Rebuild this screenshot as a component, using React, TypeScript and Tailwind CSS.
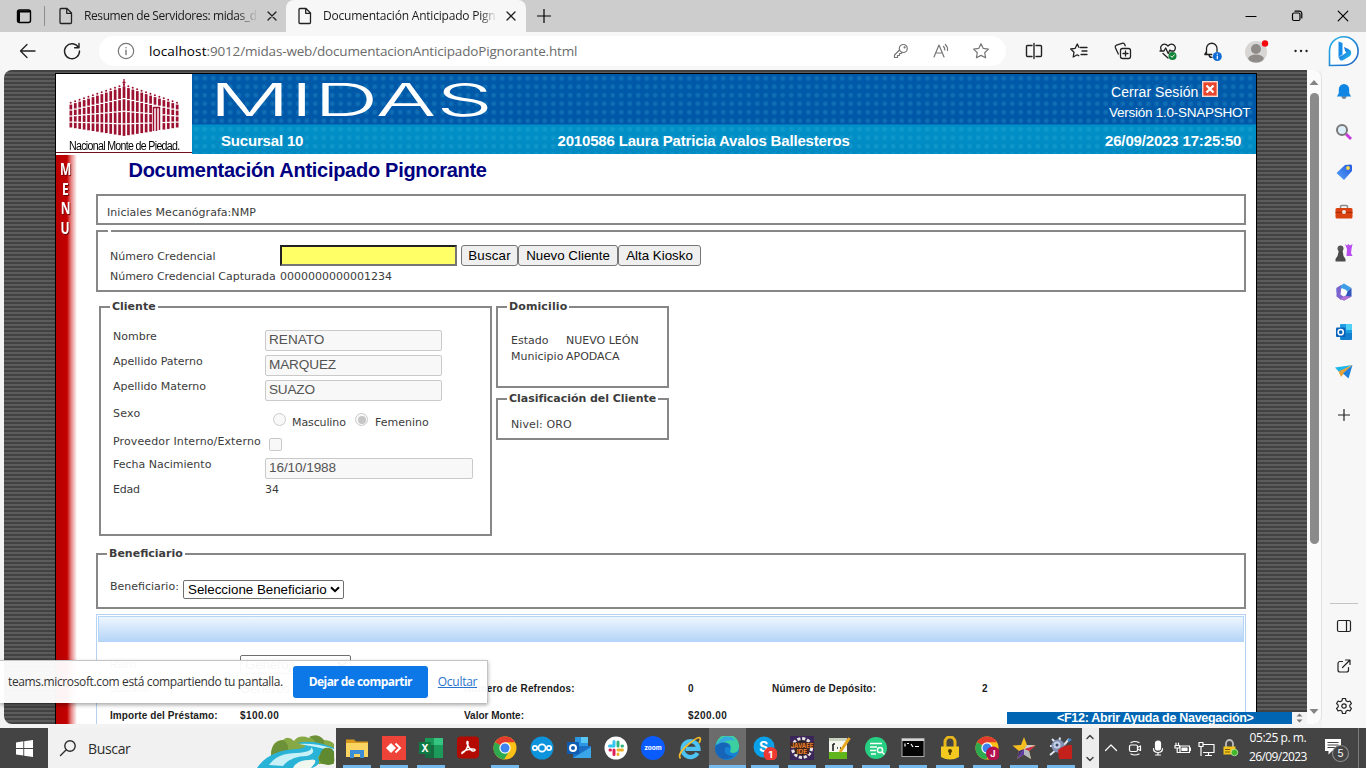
import React, { useLayoutEffect, useRef } from "react";

const VERD = "font-['DejaVu_Sans',sans-serif] text-[11px] leading-[13px] text-[#3c3c3c]";
const ARIAL = "font-['Liberation_Sans',sans-serif]";
const SEGOE = "font-['Open_Sans','Noto_Sans',sans-serif]";

/* Single line of text whose letter spacing is tuned to fill a given width. */
function T({ w, c = "", children }: { w: number; c?: string; children: string }) {
  const ref = useRef<HTMLSpanElement>(null);
  useLayoutEffect(() => {
    const el = ref.current;
    if (!el) return;
    el.style.letterSpacing = "0px";
    const natural = el.offsetWidth;
    el.style.letterSpacing = `${(w - natural) / children.length}px`;
  }, [w, children]);
  return (
    <span ref={ref} className={`inline-block shrink-0 whitespace-pre ${c}`}>
      {children}
    </span>
  );
}

function Ic({ s = 20, vb = 20, c = "", children }: { s?: number; vb?: number; c?: string; children: React.ReactNode }) {
  return (
    <svg width={s} height={s} viewBox={`0 0 ${vb} ${vb}`} className={`shrink-0 ${c}`} fill="none" stroke="currentColor" strokeWidth="1.2" strokeLinecap="round" strokeLinejoin="round">
      {children}
    </svg>
  );
}

const PageIcon = () => (
  <Ic s={18} vb={18} c="text-[#222]">
    <path d="M4 1.5h6l4.5 4.5v9.5a1 1 0 0 1-1 1H4a1 1 0 0 1-1-1v-13a1 1 0 0 1 1-1zM9.700 1.700V6.300h4.600" strokeWidth="1.300" />
  </Ic>
);
const Cross = () => (
  <Ic s={10} vb={10} c="text-[#222]"><path d="M1 1l8 8M9 1l-8 8" strokeWidth="1.300" /></Ic>
);

function TabBar() {
  return (
    <div className={`flex h-8 shrink-0 items-stretch bg-[#cdcdcd] text-[12px] text-[#1b1b1b] ${SEGOE}`}>
      <div className="flex w-[44px] items-center pl-[15px]">
        <Ic s={18} vb={18} c="text-black">
          <rect x="2.500" y="3" width="13" height="12.500" rx="2" strokeWidth="1.400" />
          <path d="M3.500 4.500h11M4 5v9" strokeWidth="2" />
        </Ic>
      </div>
      <div className="flex w-[242px] items-center">
        <div className="h-5 w-px bg-[#8c8c8c]" />
        <div className="ml-3"><PageIcon /></div>
        <div className="ml-[9px] w-[174px] overflow-hidden [mask-image:linear-gradient(90deg,#000_88%,transparent)]">
          <T w={173}>Resumen de Servidores: midas_d</T>
        </div>
        <div className="ml-[9px]"><Cross /></div>
      </div>
      <div className="flex w-[240px] items-center rounded-t-lg bg-[#f7f7f7]">
        <div className="ml-[10px]"><PageIcon /></div>
        <div className="ml-[9px] w-[174px] overflow-hidden [mask-image:linear-gradient(90deg,#000_90%,transparent)]">
          <T w={173}>Documentación Anticipado Pign</T>
        </div>
        <div className="ml-[9px]"><Cross /></div>
      </div>
      <div className="flex w-[36px] items-center justify-center">
        <Ic s={14} vb={14} c="text-black"><path d="M7 .5v13M.5 7h13" strokeWidth="1.200" /></Ic>
      </div>
      <div className="grow" />
      <div className="flex w-[138px] items-center text-black">
        <div className="flex w-[46px] justify-center"><Ic s={12} vb={12}><path d="M1 6.500h10" /></Ic></div>
        <div className="flex w-[46px] justify-center">
          <Ic s={12} vb={12}><rect x="1.500" y="3" width="7.500" height="7.500" rx="1.500" /><path d="M4 1.200h4.500a2.300 2.300 0 0 1 2.300 2.300V8" /></Ic>
        </div>
        <div className="flex w-[46px] justify-center"><Ic s={12} vb={12}><path d="M1.200 1.200l9.600 9.600M10.800 1.200l-9.600 9.600" /></Ic></div>
      </div>
    </div>
  );
}

function Toolbar() {
  return (
    <div className={`flex h-[38px] shrink-0 items-center bg-[#f7f7f7] text-[#222] ${SEGOE}`}>
      <div className="w-[18px]" />
      <Ic><path d="M17 10H2.500M9 3.500L2.500 10L9 16.500" strokeWidth="1.300" /></Ic>
      <div className="w-[24px]" />
      <Ic><path d="M16.500 6.500A7.500 7.500 0 1 0 17.500 10M17 2.500v4.300h-4.300" strokeWidth="1.400" /></Ic>
      <div className="ml-[17px] flex h-[30px] w-[907px] items-center rounded-full bg-white">
        <Ic s={18} vb={18} c="ml-[18px] text-[#777]"><circle cx="9" cy="9" r="7.700" /><path d="M9 8.200v4.300M9 5.600v.2" strokeWidth="1.400" /></Ic>
        <div className="ml-[14px] flex grow text-[13.5px]">
          <T w={58} c="text-black">localhost</T>
          <T w={371} c="text-[#6b6b6b]">:9012/midas-web/documentacionAnticipadoPignorante.html</T>
        </div>
        <div className="flex items-center text-[#777]">
          <div className="flex w-[40px] justify-center">
            <Ic s={16} vb={16}><circle cx="10.300" cy="5.500" r="4" /><circle cx="11.600" cy="4.400" r=".5" /><path d="M6.500 7L1.500 12v2.500h3v-2h2v-2h2l.700-1.300" /></Ic>
          </div>
          <div className="flex w-[40px] justify-center">
            <Ic s={18} vb={18}><path d="M2 15L7 3l5 12M3.800 11h6.400M11.500 4.500q1.500 1.500 1.300 3.500M13.300 2.500q2.700 2.500 2.200 6" /></Ic>
          </div>
          <div className="flex w-[40px] justify-center">
            <Ic s={18} vb={18}><path d="M9 1.700l2.300 4.700 5.100.7-3.700 3.600.9 5.100L9 13.400l-4.600 2.400.9-5.100L1.600 7.100l5.100-.7z" /></Ic>
          </div>
        </div>
        <div className="w-[5px]" />
      </div>
      <div className="ml-[6px] flex items-center">
        <div className="flex w-[44.5px] justify-center"><Ic s={18} vb={18}><path d="M7 3.500H2.500a1 1 0 0 0-1 1v9a1 1 0 0 0 1 1H7M11 3.500h4.500a1 1 0 0 1 1 1v9a1 1 0 0 1-1 1H11M9 1.500v15" strokeWidth="1.400" /></Ic></div>
        <div className="flex w-[44.5px] justify-center"><Ic s={18} vb={18}><path d="M10.500 5.500H17M12 9h5M11 12.500h6M9 5.500L7.300 2 5.200 6.300l-4.500.7L4 10.300l-.8 4.700 4.100-2.200 1.500.9" strokeWidth="1.300" /></Ic></div>
        <div className="flex w-[44.5px] justify-center"><Ic s={18} vb={18}><rect x="6.500" y="6.500" width="10" height="10" rx="2" strokeWidth="1.300" /><path d="M11.500 9v5M9 11.500h5M4.300 12L1.300 5.500a2 2 0 0 1 1.200-2.400L8 1.300q1.800-.5 2.600 1l.6 1.500" strokeWidth="1.300" /></Ic></div>
        <div className="flex w-[44.5px] justify-center"><Ic s={18} vb={18}><path d="M2.500 8.500Q.5 5 3.200 2.900 6.300 1 9 4q2.700-3 5.800-1.100Q17.500 5 15.500 8.500M1 9h4l1.700-3 2.500 5.500 1.700-3.500 1 1h3M4 11.500l5 4.500" strokeWidth="1.300" /><circle cx="13.500" cy="14" r="4" fill="#12843a" stroke="none" /><path d="M11.700 14l1.300 1.300 2.300-2.500" stroke="#fff" strokeWidth="1" /></Ic></div>
        <div className="flex w-[44.5px] justify-center"><Ic s={20} vb={20}><path d="M4.500 13.500V7.500a5 5 0 0 1 10.500 0v3M2.800 13.500h7M2.800 13.300L4.500 10.500M7 14q.5 2.500 3 2.300" strokeWidth="1.300" /><circle cx="15.300" cy="15.500" r="4.500" fill="#0f6cd6" stroke="none" /><path d="M15.300 15v2.700M15.300 13v.2" stroke="#fff" /></Ic></div>
        <div className="flex w-[44.5px] justify-center">
          <svg width="26" height="28" viewBox="0 0 26 28" className="-mt-[2px]"><circle cx="12" cy="16" r="11" fill="#d8d6d4" /><circle cx="12" cy="13" r="5" fill="#8e8b89" /><ellipse cx="12" cy="22.500" rx="7.700" ry="4" fill="#8e8b89" /><circle cx="21" cy="7.500" r="3.200" fill="#f50a12" /></svg>
        </div>
        <div className="flex w-[44.5px] justify-center"><Ic s={18} vb={18}><path d="M3.500 9h.1M9 9h.1M14.500 9h.1" strokeWidth="2.300" /></Ic></div>
      </div>
      <div className="ml-[4px] h-[32px] w-[32px]">
        <svg width="32" height="32" viewBox="0 0 32 32">
          <defs>
            <linearGradient id="bg1" x1="0" y1="0" x2="1" y2="1"><stop offset="0" stopColor="#2bb5e8" /><stop offset="1" stopColor="#1a5fc4" /></linearGradient>
            <linearGradient id="bg2" x1="0" y1="0" x2="1" y2="1"><stop offset="0" stopColor="#1659d6" /><stop offset="1" stopColor="#27c5ef" /></linearGradient>
          </defs>
          <path d="M1.500 30.500V16A14.300 14.300 0 1 1 16 30.300z" fill="#fff" stroke="url(#bg1)" strokeWidth="1.600" />
          <path d="M10.500 6.500l4 1.500v11.500l-4 2.500z" fill="#178be8" />
          <path d="M16 12l4.500 2q3 1.500 2.800 4 0 2-2 3.500l-6.300 3.700q-1.500.8-3-.3L10.500 22l3.500-1.500 4.500-3-1.300-1.300z" fill="url(#bg2)" />
        </svg>
      </div>
    </div>
  );
}

function Building() {
  const cols = Array.from({ length: 25 }, (_, i) => i);
  return (
    <svg width="112" height="59" viewBox="0 0 112 59" className="shrink-0">
      {cols.map((i) => {
        const d = Math.abs(i - 12);
        const x = 1.5 + i * 4.43;
        const top = 7 + d * 1.5;
        const bot = 57.5 - d * 0.7;
        const h = (bot - top) / 4;
        return (
          <g key={i} fill="#9c1030">
            {[0, 1, 2, 3].map((r) => (
              <rect key={r} x={x} y={top + r * h + 0.6} width="2.7" height={h - 1.200} />
            ))}
            <circle cx={x + 1.2} cy={top - 1.300} r="1" />
          </g>
        );
      })}
      <path d="M56 0v8M54.500 3.500h3" stroke="#9c1030" strokeWidth="1.300" />
      <path d="M84.500 27h9v26h-9z" fill="#fff" />
      <path d="M85.500 28v24M88.500 28v24M91.500 28v23M85 28.500h7" stroke="#9c1030" strokeWidth="1.500" fill="none" />
    </svg>
  );
}

function Header() {
  return (
    <div className={`flex h-[80px] shrink-0 ${ARIAL}`}>
      <div className="flex w-[136px] flex-col items-center bg-white pt-[5px]">
        <Building />
        <div className="mt-[1px] h-[13px] w-[110px]">
          <div className="w-[130px] origin-left scale-x-[0.85] text-[12.5px] leading-[14px] text-black"><T w={130}>Nacional Monte de Piedad.</T></div>
        </div>
        <div className="h-px w-full bg-[#6e0f1e]" />
      </div>
      <div className="flex grow flex-col bg-[radial-gradient(circle_at_center,rgba(70,190,225,0.26)_0,rgba(70,190,225,0.18)_2px,transparent_3px),linear-gradient(180deg,#0059a9_0,#0057a8_50px,#0090c8_51px,#0089c2_100%)] bg-[length:8.5px_8.5px,100%_100%] text-white">
        <div className="flex h-[50px]">
          <div className="ml-[17px] w-[286px]">
            <div className="h-[50px] w-[143px] origin-left scale-x-[2] font-['Inter',sans-serif] text-[45px] leading-[51px] font-light"><T w={142}>MIDAS</T></div>
          </div>
          <div className="grow" />
          <div className="flex w-[147px] flex-col text-[14px]">
            <div className="flex h-[29px] items-center pt-[6px] pl-[2px] leading-[16px]">
              <T w={87}>Cerrar Sesión</T>
              <svg width="16" height="16" viewBox="0 0 16 16" className="-mt-[6px] ml-1"><rect x=".7" y=".7" width="14.600" height="14.600" fill="#e8452c" stroke="#fbd9cf" strokeWidth="1.400" /><path d="M4.500 4.500l7 7M11.500 4.500l-7 7" stroke="#fff" strokeWidth="2.300" /></svg>
            </div>
            <div className="text-[13.5px] leading-[20px]"><T w={141}>Versión 1.0-SNAPSHOT</T></div>
          </div>
        </div>
        <div className="flex h-[30px] items-center pt-[4px] text-[15px] leading-[18px] font-bold">
          <div className="ml-[29px] w-[336.5px]"><T w={82}>Sucursal 10</T></div>
          <T w={292}>2010586 Laura Patricia Avalos Ballesteros</T>
          <div className="grow" />
          <div className="w-[151px]"><T w={136}>26/09/2023 17:25:50</T></div>
        </div>
      </div>
    </div>
  );
}

function Box({ legend, lw = 0, c, children }: { legend?: string; lw?: number; c: string; children: React.ReactNode }) {
  return (
    <section className={`relative shrink-0 border-2 border-[#878787] bg-white ${c}`}>
      {legend && (
        <div className={`absolute -top-[8px] left-[9px] bg-white px-[2px] font-bold ${VERD}`}><T w={lw}>{legend}</T></div>
      )}
      {children}
    </section>
  );
}

const Input = ({ w, text, tw }: { w: string; text: string; tw: number }) => (
  <div className={`flex h-[21px] items-center rounded-[2px] border border-[#cacaca] bg-[#f8f8f8] pb-px pl-[3px] text-[13.6px] leading-[16px] text-[#545454] ${w} ${ARIAL}`}>
    <T w={tw}>{text}</T>
  </div>
);
const Btn = ({ w, tw, text }: { w: string; tw: number; text: string }) => (
  <button className={`flex h-[21px] items-center justify-center rounded-[3px] border border-[#767676] bg-[#efefef] text-[13.33px] leading-none text-black ${w} ${ARIAL}`}>
    <T w={tw}>{text}</T>
  </button>
);
const Select = ({ w, tw, text }: { w: string; tw: number; text: string }) => (
  <div className={`flex h-[19px] items-center justify-between rounded-[2px] border border-[#6f6f6f] bg-white pr-[3px] pl-[4px] text-[13.33px] leading-none text-black ${w} ${ARIAL}`}>
    <T w={tw}>{text}</T>
    <svg width="10" height="7" viewBox="0 0 10 7"><path d="M1 1.200l4 4 4-4" fill="none" stroke="#000" strokeWidth="2" /></svg>
  </div>
);

function Cliente() {
  return (
    <Box legend="Cliente" lw={44} c={`ml-[3px] h-[230px] w-[393px] pt-[22px] pl-[12px] ${VERD}`}>
      <div className="flex h-[25px]"><div className="w-[152px]"><T w={44}>Nombre</T></div><Input w="w-[177px]" text="RENATO" tw={55} /></div>
      <div className="flex h-[25px]"><div className="w-[152px]"><T w={90}>Apellido Paterno</T></div><Input w="w-[177px]" text="MARQUEZ" tw={67} /></div>
      <div className="flex h-[25px]"><div className="w-[152px]"><T w={93}>Apellido Materno</T></div><Input w="w-[177px]" text="SUAZO" tw={46} /></div>
      <div className="flex h-[29px]">
        <div className="w-[160px] pt-[2px]"><T w={27}>Sexo</T></div>
        <div className="mt-[8px] size-[13px] rounded-full border border-[#cacaca] bg-[#f8f8f8]" />
        <div className="ml-[6px] w-[63px] pt-[11px]"><T w={54}>Masculino</T></div>
        <div className="mt-[8px] flex size-[13px] items-center justify-center rounded-full border border-[#cacaca] bg-[#f8f8f8]"><div className="size-[8px] rounded-full bg-[#c6c6c6]" /></div>
        <div className="ml-[7px] pt-[11px]"><T w={54}>Femenino</T></div>
      </div>
      <div className="flex h-[24px]">
        <div className="w-[156px] pt-[1px]"><T w={148}>Proveedor Interno/Externo</T></div>
        <div className="mt-[4px] size-[13px] rounded-[2px] border border-[#cacaca] bg-[#f8f8f8]" />
      </div>
      <div className="flex h-[25px]"><div className="w-[152px]"><T w={98}>Fecha Nacimiento</T></div><Input w="w-[208px]" text="16/10/1988" tw={67} /></div>
      <div className="flex h-[25px]"><div className="w-[152px]"><T w={27}>Edad</T></div><T w={14}>34</T></div>
    </Box>
  );
}

function Page() {
  return (
    <div className="relative flex h-[654px] w-[1303px] overflow-hidden rounded-l-[8px] bg-[repeating-linear-gradient(180deg,#424242_0_2px,#5c5c5c_2px_4px)]">
      <div className="ml-[51px] mt-[3px] flex h-[651px] w-[1202px] flex-col border-x border-t border-black bg-white">
        <Header />
        <div className="flex h-[570px] overflow-hidden">
          <div className={`mt-[1px] flex w-[21px] shrink-0 flex-col items-center bg-[linear-gradient(90deg,#b80000_0,#c20000_11px,#e58080_15px,#fff_21px)] pt-[5px] pr-[2px] text-[16px] leading-[19.5px] font-bold text-white [text-shadow:1px_1px_1px_#6a0000] ${SEGOE}`}>
            <div className="scale-x-75">M</div><div className="scale-x-75">E</div><div className="scale-x-75">N</div><div className="scale-x-75">U</div>
          </div>
          <div className="ml-[19px] flex w-[1150px] flex-col">
            <div className={`h-[40px] shrink-0 pt-[4px] pl-[32.5px] text-[20px] leading-[24px] font-bold text-[#000080] ${ARIAL}`}><T w={358}>Documentación Anticipado Pignorante</T></div>
            <Box c={`h-[31px] pt-[10px] pl-[9px] ${VERD}`}><T w={149}>Iniciales Mecanógrafa:NMP</T></Box>
            <Box c={`mt-[5px] h-[62px] pt-[13px] pl-[12px] ${VERD}`}>
              <div className="absolute -top-[2px] left-[10px] h-[2px] w-[3px] bg-white" />
              <div className="flex h-[21px]">
                <div className="w-[170px] pt-[5px]"><T w={106}>Número Credencial</T></div>
                <div className="mr-[4px] h-[21px] w-[177px] border-2 border-[#767676] border-t-[#222] border-l-[#222] bg-[#ffff66]" />
                <Btn w="w-[57px]" tw={42} text="Buscar" />
                <Btn w="w-[100px]" tw={84} text="Nuevo Cliente" />
                <Btn w="w-[83px]" tw={67} text="Alta Kiosko" />
              </div>
              <div className="flex pt-[4px]"><div className="w-[170px]"><T w={166}>Número Credencial Capturada</T></div><T w={112}>0000000000001234</T></div>
            </Box>
            <div className="mt-[14px] flex h-[230px] shrink-0 gap-[4px]">
              <Cliente />
              <div className="flex flex-col gap-[10px]">
                <Box legend="Domicilio" lw={58} c={`h-[82px] w-[173px] pt-[26px] pl-[13px] ${VERD}`}>
                  <div className="flex h-[16px]"><div className="w-[55px]"><T w={37}>Estado</T></div><T w={73}>NUEVO LEÓN</T></div>
                  <div className="flex h-[16px]"><div className="w-[55px]"><T w={52}>Municipio</T></div><T w={54}>APODACA</T></div>
                </Box>
                <Box legend="Clasificación del Cliente" lw={147} c={`h-[42px] w-[173px] pt-[18px] pl-[13px] ${VERD}`}><T w={61}>Nivel: ORO</T></Box>
              </div>
            </div>
            <Box legend="Beneficiario" lw={74} c={`mt-[17px] h-[56px] pt-[25px] pl-[12px] ${VERD}`}>
              <div className="flex"><div className="w-[73px]"><T w={69}>Beneficiario:</T></div><Select w="w-[161px]" tw={139} text="Seleccione Beneficiario" /></div>
            </Box>
            <div className={`mt-[5px] h-[120px] shrink-0 border border-[#b5d3f1] p-px text-[10px] leading-[12px] font-bold text-[#1c1c1c] ${ARIAL}`}>
              <div className="h-[26px] border border-b-0 border-[#b5d5f8] bg-[linear-gradient(180deg,#eef6ff,#b3d4f7)]" />
              <div className="flex h-[34px] items-start pt-[13px] pl-[12px]"><div className="w-[130px] pt-[4px] font-normal">Ramo:</div><div className="font-normal"><Select w="w-[111px]" tw={50} text="Generos" /></div></div>
              <div className="flex h-[27px] items-start pt-[7px] pl-[12px]">
                <div className="w-[130px] font-normal">Subramo:</div><div className="w-[224px] text-[13px] font-normal">Generos</div>
                <div className="w-[224px]"><T w={111}>Número de Refrendos:</T></div>
                <div className="w-[84px]">0</div>
                <div className="w-[210px]"><T w={104}>Número de Depósito:</T></div>
                <div>2</div>
              </div>
              <div className="flex h-[27px] items-start pt-[7px] pl-[12px]">
                <div className="w-[130px]"><T w={108}>Importe del Préstamo:</T></div><div className="w-[224px]"><T w={39}>$100.00</T></div>
                <div className="w-[224px]"><T w={60}>Valor Monte:</T></div>
                <T w={39}>$200.00</T>
              </div>
            </div>
          </div>
        </div>
      </div>
      <div className={`absolute right-0 bottom-0 flex h-[12px] w-[300px] bg-[#f4f4f4] text-[12.5px] leading-[12px] font-bold text-white ${ARIAL}`}>
        <div className="w-[285px] bg-[#0066b3] pl-[50px]"><T w={197}>{"<F12: Abrir Ayuda de Navegación>"}</T></div>
        <svg width="15" height="12" viewBox="0 0 15 12"><path d="M7.500 1.500l3 3h-6zM7.500 10.500l3-3h-6z" fill="#777" /></svg>
      </div>
    </div>
  );
}

function Sidebar() {
  return (
    <div className="flex w-[44px] flex-col items-center bg-[#f7f7f7] pt-[13px] text-[#222]">
      <div className="flex h-[40px] items-start"><svg width="18" height="18" viewBox="0 0 18 18"><path d="M6.500 13h5a2.500 3 0 0 1-5 0z" fill="#7a8794" /><path d="M9 1a5.200 5.200 0 0 1 5.200 5.200V10l1.800 3.500H2L3.800 10V6.200A5.200 5.200 0 0 1 9 1z" fill="#0f86e4" /></svg></div>
      <div className="flex h-[40px] items-start"><svg width="18" height="18" viewBox="0 0 18 18"><path d="M11 11l5 5" stroke="#c63be0" strokeWidth="3" /><circle cx="7" cy="7" r="5" fill="#dbeefa" stroke="#777" strokeWidth="2" /></svg></div>
      <div className="flex h-[40px] items-start"><svg width="18" height="18" viewBox="0 0 18 18"><defs><linearGradient id="tg" x1="0" y1="1" x2="1" y2="0"><stop offset="0" stopColor="#58a3f8" /><stop offset="1" stopColor="#2257df" /></linearGradient></defs><path d="M10 2l6-.5 1 1V8L9 17 1.500 10z" fill="url(#tg)" /><circle cx="13" cy="5" r="1.900" fill="#ffd94a" /></svg></div>
      <div className="flex h-[40px] items-start"><svg width="20" height="18" viewBox="0 0 20 18"><path d="M6.500 5V3.500q0-1 1-1h5q1 0 1 1V5" fill="none" stroke="#8a8a8a" strokeWidth="1.500" /><rect x="1.500" y="5" width="17" height="10.500" rx="1.500" fill="#d8400f" /><path d="M1.500 9.500h17" stroke="#a62a06" /><circle cx="10" cy="9" r="2" fill="#e8e4df" /></svg></div>
      <div className="flex h-[40px] items-start"><svg width="20" height="20" viewBox="0 0 20 20"><path d="M11 1l2 1.500L14.500 1 16 2.500 18.500 1 17.500 6 17 10l1.500 3h-6L13 6z" fill="#b84cf0" /><circle cx="6.500" cy="5.500" r="3" fill="#555" /><path d="M5 7h3.500l1 6 2 3v2.500H1.500V16l2-3z" fill="#4b4b4b" /></svg></div>
      <div className="flex h-[40px] items-start"><svg width="18" height="18" viewBox="0 0 18 18"><path d="M9 .5L16.500 5l-4 3.500L7 5 4 8.500 1.500 9V5z" fill="#3f9fe6" /><path d="M1.500 5l4.500-3q-1 2 0 5.500l-.5 4L9 14l-3 3-4.500-3.500z" fill="#7d63cf" /><path d="M16.500 5v8.500L9 17.500l-4-2 6-3 1.500-4z" fill="#2f55bd" /><path d="M5 15.500l5-2.500 6.500.5L9 17.500z" fill="#b66fd8" /><circle cx="9" cy="9" r="2.700" fill="#fff" /></svg></div>
      <div className="flex h-[40px] items-start"><svg width="18" height="18" viewBox="0 0 18 18"><rect x="5" y="1" width="12" height="16" rx="1" fill="#1d9be3" /><path d="M11 1h6v6h-6z" fill="#4fd1f6" /><path d="M5 10l12 0v6l-1 1H6z" fill="#1280cf" /><rect x="1" y="4.500" width="9.500" height="9.500" rx="1" fill="#0a63b8" /><circle cx="5.700" cy="9.200" r="2.600" fill="none" stroke="#fff" strokeWidth="1.500" /></svg></div>
      <div className="flex h-[40px] items-start"><svg width="20" height="18" viewBox="0 0 20 18"><path d="M18.500 2L1 4.500 5 9z" fill="#1fb6e8" /><path d="M18.500 2L4.500 8.500 7 14l2.500-3z" fill="#e6a23a" /><path d="M18.500 2L9 10.500l5.500 5z" fill="#1f7fdc" /></svg></div>
      <div className="flex h-[40px] items-start pt-[6px]"><Ic s={12} vb={12}><path d="M6 .5v11M.5 6h11" /></Ic></div>
      <div className="mt-[160px] h-px w-[28px] bg-[#c4c4c4]" />
      <div className="flex h-[40px] items-start pt-[14px]"><Ic s={16} vb={16}><rect x="1.500" y="2.500" width="13" height="11" rx="1.500" /><path d="M10.500 3v10" /></Ic></div>
      <div className="flex h-[40px] items-start pt-[14px]"><Ic s={16} vb={16}><path d="M6.500 3.500H4a2 2 0 0 0-2 2V12a2 2 0 0 0 2 2h6.500a2 2 0 0 0 2-2V9.500M6.500 9.500L13.500 2.500M9.500 2h4.500v4.500" /></Ic></div>
      <div className="flex h-[40px] items-start pt-[13px]"><Ic s={18} vb={18}><circle cx="9" cy="9" r="2.200" /><path d="M7.500 1.500h3l.5 2.200 1.700 1 2.200-.7 1.500 2.600L14.800 8.200v1.600l1.600 1.600-1.500 2.600-2.200-.7-1.700 1-.5 2.200h-3L7 14.300l-1.700-1-2.200.7-1.500-2.600L3.200 9.800V8.200L1.600 6.600 3.100 4l2.200.7 1.700-1z" /></Ic></div>
    </div>
  );
}

function Main() {
  return (
    <div className="flex h-[658px] shrink-0 bg-[#f3f3f3] pl-[4px]">
      <Page />
      <div className="flex h-[654px] w-[15px] flex-col items-center rounded-r-[8px] border-r border-[#e2e2e2] bg-[#fbfbfb]">
        <svg width="10" height="23" viewBox="0 0 10 23"><path d="M5 10l4.500 5h-9z" fill="#858585" /></svg>
        <div className="h-[451px] w-[9px] rounded-full bg-[#8b8b8b]" />
        <div className="grow" />
        <svg width="10" height="18" viewBox="0 0 10 18"><path d="M5 8L.5 3h9z" fill="#858585" /></svg>
      </div>
      <Sidebar />
    </div>
  );
}

function Chrome() {
  return (
    <>
      <circle cx="12" cy="12" r="11.500" fill="#fbc116" />
      <path d="M12 12L2.050 6.200A11.500 11.500 0 0 1 22 6.300z" fill="#e33b2e" />
      <path d="M12 12L2.050 6.200A11.500 11.500 0 0 0 11 23.500l5-8z" fill="#2da94f" />
      <path d="M12 6.300h10L17 15z" fill="#fbc116" />
      <circle cx="12" cy="12" r="5.700" fill="#fff" /><circle cx="12" cy="12" r="4.500" fill="#3f83ee" />
    </>
  );
}
const lbl = "font-['Inter',sans-serif] font-bold";

const APPS: { bar: boolean; active?: boolean; art: React.ReactNode }[] = [
  { bar: true, art: <><path d="M1 3.500h8l2 2h12V8H1z" fill="#d79a1c" /><path d="M1 7h22v14H1z" fill="#fbd461" /><path d="M5 14h14v8h-4v-4H9v4H5z" fill="#3c8fd6" /></> },
  { bar: true, art: <><path d="M0 0h24v24H0z" fill="#ee4338" /><path d="M9 7l5 5-5 5-5-5z" fill="#fff" /><path d="M13.500 7.500L18 12l-4.500 4.500" fill="none" stroke="#fff" strokeWidth="2" /></> },
  { bar: true, art: <><path d="M6 2h18v20H6z" fill="#1c9a5a" /><path d="M15 2h9v7h-9z" fill="#35c481" /><path d="M6 9h9v13H6z" fill="#17693f" /><rect x="0" y="6" width="12" height="12" rx="1" fill="#0f7a41" /><text x="6" y="16" textAnchor="middle" fontSize="10" fill="#fff" className={lbl}>X</text></> },
  { bar: false, art: <><rect x="1" y=".5" width="22" height="22" rx="4" fill="#b30b00" /><path d="M6 17.500q6-4 6-10.500 0-2-.8-1.500-1.200 1 1.800 6t6 3q.5-2-4-1.500-5 .5-8.500 3-1 1-.5 1.500z" fill="none" stroke="#fff" strokeWidth="1.500" /></> },
  { bar: true, art: <Chrome /> },
  { bar: false, art: <><circle cx="12" cy="12" r="11.500" fill="#0d94dc" /><g fill="none" stroke="#fff" strokeWidth="1.700"><circle cx="12" cy="12" r="3.600" /><circle cx="5" cy="12" r="2.200" /><circle cx="19" cy="12" r="2.200" /></g></> },
  { bar: false, art: <><path d="M8 1h13v12H8z" fill="#2b96e4" /><path d="M14 1h7v6h-7z" fill="#59c8f5" /><path d="M6 10l18 0v12H6z" fill="#1a6fc4" /><path d="M6 22l18-11v11z" fill="#3aa5e8" /><rect x="0" y="6" width="12" height="12" rx="1" fill="#0f5cb0" /><circle cx="6" cy="12" r="3" fill="none" stroke="#fff" strokeWidth="2" /></> },
  { bar: false, art: <><circle cx="12" cy="12" r="11.500" fill="#fff" /><g strokeWidth="3" strokeLinecap="round"><path d="M10 5.500v4M5.500 10H10" stroke="#36c5f0" /><path d="M14 6v4M18 10h.5" stroke="#2eb67d" /><path d="M14 14h4.500M14 18v.5" stroke="#ecb22e" /><path d="M10 14v4.500M6 14h.5" stroke="#e01e5a" /></g></> },
  { bar: false, art: <><circle cx="12" cy="12" r="12" fill="#0b5cff" /><text x="12" y="14" textAnchor="middle" fontSize="6.500" fill="#fff" className={lbl}>zoom</text></> },
  { bar: false, art: <><path d="M19.500 17A8 8 0 1 1 20.500 12.800H7.500" fill="none" stroke="#4cc3f2" strokeWidth="4.200" /><path d="M2.500 22.500q-3.500-4 6-12.500T21.500 1.500q2 1-.5 5.500" fill="none" stroke="#f3bd2b" strokeWidth="1.700" /></> },
  { bar: true, active: true, art: <><circle cx="12" cy="12" r="12" fill="#1682d4" /><path d="M1 9A11.500 11.500 0 0 1 24 11q0 5-5 6-5 0-3.500-3.500Q17 7 10 6.500 4 6 1 9z" fill="#3ccfa0" /><path d="M0 12q2-6 8.500-5.500 6 .5 6.500 5-5-2-5.500 2.500Q10 20 19 20 13 25 6.500 22.500 0 19 0 12z" fill="#1765b8" /><path d="M1 9Q6 .5 12 .5q5 0 8 4Q12 3 1 9z" fill="#35a9df" /></> },
  { bar: true, art: <><circle cx="11" cy="11" r="10.500" fill="#0ba1e8" /><text x="10.500" y="16" textAnchor="middle" fontSize="14" fill="#fff" className={lbl}>S</text><circle cx="17.500" cy="18" r="7" fill="#ee3a33" /><text x="17.500" y="21.500" textAnchor="middle" fontSize="9.500" fill="#fff" className={lbl}>1</text></> },
  { bar: true, art: <><path d="M0 0h24v24H0z" fill="#3a2658" /><circle cx="12" cy="12" r="9" fill="none" stroke="#e9e4e0" strokeWidth="4" strokeDasharray="3 1.700" /><circle cx="12" cy="12" r="8" fill="#2b2431" /><path d="M0 6.500h24v5H0zM5 12h14v6H5z" fill="#42251c" /><text x="12" y="11.500" textAnchor="middle" fontSize="5.800" fill="#f0812b" className={lbl}>JAVAEE</text><text x="12" y="17.500" textAnchor="middle" fontSize="6.500" fill="#f0812b" className={lbl}>IDE</text></> },
  { bar: true, art: <><rect x="2" y="2" width="18" height="21" fill="#f4f6ee" /><path d="M2 16h18v7H2z" fill="#5fb51b" /><path d="M2 2h18v3H2z" fill="#c9d3c0" /><path d="M6 8h2M6 8v7M10 12h1M13 12h1M16 12h1" stroke="#222" strokeWidth="1.600" /><path d="M22.500 2L13 16" stroke="#e8a71e" strokeWidth="3" /></> },
  { bar: true, art: <><circle cx="12" cy="12" r="11" fill="#27cf82" /><path d="M6 7.500h12M6 11h7M6 14.500h6M7 18h5" stroke="#fff" strokeWidth="1.600" /><circle cx="16" cy="14" r="2.600" fill="none" stroke="#fff" strokeWidth="1.500" /><path d="M18 16l2.500 2.500" stroke="#fff" strokeWidth="1.500" /></> },
  { bar: true, art: <><rect x="1" y="2.500" width="22" height="18" fill="#050505" stroke="#aaa" strokeWidth="1" /><path d="M1 3h22v2H1z" fill="#d5d5d5" /><path d="M4 7.500v3M6 7.500h2M10 8l2 3M14 10.500h4" stroke="#fff" strokeWidth="1.200" /></> },
  { bar: true, art: <><path d="M7 11V6a5 5 0 0 1 10 0v5" fill="none" stroke="#e6b61c" strokeWidth="3" /><path d="M3 10.500h18v10.500q-9 5-18 0z" fill="#f4c91f" /><circle cx="12" cy="15" r="2" fill="#4d3b05" /><path d="M12 15v4" stroke="#4d3b05" strokeWidth="1.600" /></> },
  { bar: true, art: <><Chrome /><circle cx="18" cy="17.500" r="7" fill="#b3124f" /><text x="18" y="21" textAnchor="middle" fontSize="9" fill="#fff" className={lbl}>J</text></> },
  { bar: true, art: <><path d="M12 1l3 8 8.500.5-6.500 5.500 2 8-7-4.500L5 23l2-8L.5 9.500 9 9z" fill="#f5bd1f" /><path d="M12 13l11.500-3.500-6.500 5.500z" fill="#d2224c" /><path d="M15 9l8.500.5L12 13z" fill="#c9ccd4" /><path d="M12 13l5 2 2 8-7-4.500z" fill="#b3b9c4" /><path d="M12 13L5 23l2-8z" fill="#3f2c84" /><path d="M12 13v5.500L5 23z" fill="#5d3aa8" /></> },
  { bar: true, art: <><path d="M1 10h4M3 3l4 4M11 1.500l-1 5M1 19l6-5M20 3l-5 6" stroke="#dfe3ee" strokeWidth="2" /><circle cx="9" cy="10" r="6.500" fill="#8292b6" /><circle cx="8" cy="9" r="3.500" fill="#c9d1e6" /><circle cx="8" cy="9" r="1.500" fill="#3c4a70" /><path d="M9 14q5-5 14-5v14H10z" fill="#c4211d" /><path d="M19 5l3-2" stroke="#3b82c4" strokeWidth="2.500" /></> },
];

function Taskbar() {
  return (
    <div className={`flex h-[40px] shrink-0 bg-[#444444] text-white ${SEGOE}`}>
      <div className="flex w-[48px] items-center justify-center">
        <svg width="17" height="17" viewBox="0 0 17 17" fill="#fff"><path d="M0 2.400L7.300 1.300V8H0zM8.200 1.200L17 0v8H8.200zM0 8.900h7.300v6.700L0 14.600zM8.200 8.900H17V17l-8.800-1.200z" /></svg>
      </div>
      <div className="flex w-[288px] items-center bg-[#f1f1f1] pl-[11px] text-[#2d2d2d]">
        <Ic s={18} vb={18}><circle cx="11" cy="7" r="5.200" strokeWidth="1.400" /><path d="M7 11L1.500 16.500" strokeWidth="1.400" /></Ic>
        <div className="ml-[11px] w-[169px] text-[14px]"><T w={43}>Buscar</T></div>
        <svg width="79" height="40" viewBox="0 0 79 40" className="shrink-0">
          <path d="M14 28Q14 12 26 12 31 7 37 13 42 6 52 10 60 4 66 12q8 0 11 4v20H20z" fill="#86a845" />
          <path d="M26 12q6 3 5 12-6 2-17 4 0-14 12-16zM52 9q7 2 7 10l8 5V12q-6-7-15-3z" fill="#6d9138" />
          <path d="M0 40Q12 22 40 21q12-2 6-5l-6-1q12-3 26 1 10 3 11 4v7q-16-3-16 3 4 6-6 10z" fill="#29b3d6" />
          <path d="M12 37q8-12 28-12 16-1 14-6 6 6-4 9-16 0-24 10zM42 16q18-1 35 5v2q-16-4-35-7z" fill="#c8f1f7" />
          <path d="M36 40q4-8 16-8 8-2 6 3l-4 5z" fill="#f0f7ef" />
          <path d="M63 27q2-9 9-7 6 0 5 9 2 8-6 8l-5-1q-6-3-3-9z" fill="#5f8a30" />
        </svg>
      </div>
      <div className="ml-[2px] flex">
        {APPS.map((a, i) => (
          <div key={i} className={`flex w-[37.1px] flex-col items-center pt-[8px] ${a.active ? "bg-[#6c6c6c]" : ""}`}>
            <svg width="24" height="24" viewBox="0 0 24 24" className="shrink-0">{a.art}</svg>
            <div className={`mt-[5px] h-[3px] ${a.active ? "w-full" : "w-[28px]"} ${a.bar ? "bg-[#76b9ed]" : ""}`} />
          </div>
        ))}
      </div>
      <div className="ml-[2px] flex w-[17px] flex-col items-center justify-between bg-[#ededed] py-[5px] text-[#444]">
        <Ic s={8} vb={8}><path d="M1 5.500l3-3 3 3" strokeWidth="1.500" /></Ic>
        <Ic s={8} vb={8}><path d="M1 2.500l3 3 3-3" strokeWidth="1.500" /></Ic>
      </div>
      <div className="flex items-center">
        <div className="flex w-[24px] justify-center"><Ic s={14} vb={14}><path d="M1.500 9.500L7 4l5.500 5.500" /></Ic></div>
        <div className="flex w-[24px] justify-center"><Ic s={16} vb={16}><rect x="2.500" y="5" width="8" height="6.500" rx="1.500" /><path d="M10.500 7.500l3-1.500v4.500l-3-1.500M4 2.500q4-2 8 0M4 14q4 2 8 0" /></Ic></div>
        <div className="flex w-[23px] justify-center"><Ic s={16} vb={16}><rect x="5.500" y="1" width="5" height="9" rx="2.300" fill="#fff" /><path d="M3.500 8.500q0 4 4.500 4t4.500-4M8 12.500V15M5.500 15h5" /></Ic></div>
        <div className="flex w-[25px] justify-center"><Ic s={17} vb={17}><rect x="6" y="6" width="9.500" height="6.500" /><path d="M8 8h5v2.500H8z" fill="#fff" /><path d="M16.500 8v2.500M2 3v2M4.500 3v2M1 5.500h4.500V8H1zM3.200 8v4.500H6" /></Ic></div>
        <div className="flex w-[24px] justify-center"><Ic s={17} vb={17}><path d="M5 4.500h11v8H5.500M10.500 12.500V15M7.500 15.500h6M1 2.500h4v4H1zM3 6.500v9" /></Ic></div>
        <div className="flex w-[24px] justify-center"><svg width="17" height="18" viewBox="0 0 17 18"><path d="M4 8V4.500a3.500 3.500 0 0 1 7 0V8" fill="none" stroke="#bdbdbd" strokeWidth="1.800" /><path d="M1.500 7.500h12v8h-12z" fill="#f3c41d" /><path d="M3 10.500h5M3 13h5" stroke="#7a5d00" /><circle cx="12.500" cy="13.500" r="3.300" fill="#41b82c" stroke="#c9f0bd" strokeWidth=".7" /></svg></div>
      </div>
      <div className="flex w-[72px] flex-col items-center pr-[2px] text-[12px] leading-[19px]">
        <T w={57}>05:25 p. m.</T>
        <T w={58}>26/09/2023</T>
      </div>
      <div className="ml-[8px] flex w-[35px] items-center">
        <svg width="28" height="28" viewBox="0 0 28 28"><path d="M2 5h16v12H9l-3.500 3.500V17H2z" fill="#fff" /><path d="M4.500 8.500h11M4.500 11h11M4.500 13.500h11" stroke="#444" strokeWidth="1" /><circle cx="17.500" cy="19.500" r="8" fill="#444" stroke="#8a8a8a" strokeWidth="1.200" /><text x="17.500" y="23.300" textAnchor="middle" fontSize="10.500" fill="#fff" className="font-['Inter',sans-serif]">5</text></svg>
      </div>
      <div className="h-full w-px bg-[#7c7c7c]" />
    </div>
  );
}

export default function App() {
  return (
    <div className="relative flex h-[768px] w-[1366px] flex-col overflow-hidden bg-[#f3f3f3]">
      <TabBar />
      <Toolbar />
      <Main />
      <Taskbar />
      <div className={`absolute top-[660px] left-0 flex h-[43px] w-[488px] items-center border-t border-r border-[#c4c4c4] bg-white/[0.96] pl-[8px] text-[12px] text-[#333] shadow-[0_2px_4px_rgba(0,0,0,0.35)] ${SEGOE}`}>
        <T w={275}>teams.microsoft.com está compartiendo tu pantalla.</T>
        <button className="ml-[10px] flex h-[32px] w-[135px] items-center justify-center rounded-[3px] bg-[#0c78e8] font-bold text-white"><T w={103}>Dejar de compartir</T></button>
        <div className="ml-[10px] text-[#2a75cc]"><T w={39} c="underline">Ocultar</T></div>
      </div>
    </div>
  );
}
